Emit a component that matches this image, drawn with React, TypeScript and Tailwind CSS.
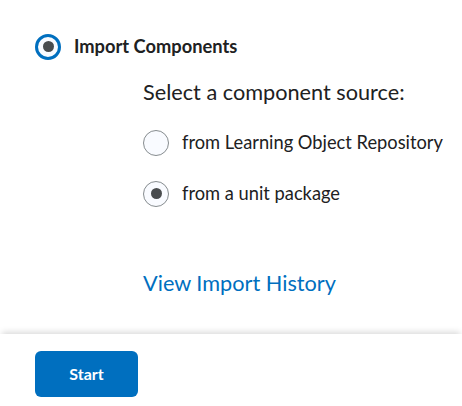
import React, { useState } from 'react';

const font = { fontFamily: 'Lato, "Noto Sans", sans-serif' };

const Radio: React.FC<{ checked: boolean; focused?: boolean }> = ({ checked, focused }) => (
  <span
    className={
      'flex h-[26px] w-[26px] shrink-0 items-center justify-center rounded-full bg-[#f9fbff] ' +
      (focused ? 'border-[3px] border-[#006fbf]' : 'border border-[#868c8f]')
    }
  >
    {checked && <span className="h-[11px] w-[11px] rounded-full bg-[#494c4e]" />}
  </span>
);

const App: React.FC = () => {
  const [source, setSource] = useState('package');

  return (
    <div className="flex h-[406px] w-[462px] flex-col bg-white text-[#202122]" style={font}>
      <div className="flex-1 pl-[35px] pt-[33px]">
        <div className="flex items-center gap-[13px]">
          <Radio checked focused />
          <span className="text-[18.3px] font-bold leading-[27px]">Import Components</span>
        </div>

        <div className="ml-[108px] mt-[16px]">
          <div className="text-[21.7px] leading-[33px] text-[#202122]">Select a component source:</div>
          <div className="mt-[20px] flex flex-col gap-[24px]">
            <label className="flex items-center gap-[13px]" onClick={() => setSource('lor')}>
              <Radio checked={source === 'lor'} />
              <span className="text-[18.3px] leading-[27px]">from Learning Object Repository</span>
            </label>
            <label className="flex items-center gap-[13px]" onClick={() => setSource('package')}>
              <Radio checked={source === 'package'} />
              <span className="text-[18.3px] leading-[27px]">from a unit package</span>
            </label>
          </div>
          <a href="#" className="mt-[60px] block text-[21.7px] leading-[33px] text-[#006fbf]">
            View Import History
          </a>
        </div>
      </div>

      <div className="h-[72px] bg-white pl-[35px] pt-[17px] shadow-[0_-4px_6px_-2px_rgba(0,0,0,0.15)]">
        <button className="h-[46px] w-[103px] rounded-[6px] bg-[#006fbf] text-[16px] font-bold text-white">
          Start
        </button>
      </div>
    </div>
  );
};

export default App;
